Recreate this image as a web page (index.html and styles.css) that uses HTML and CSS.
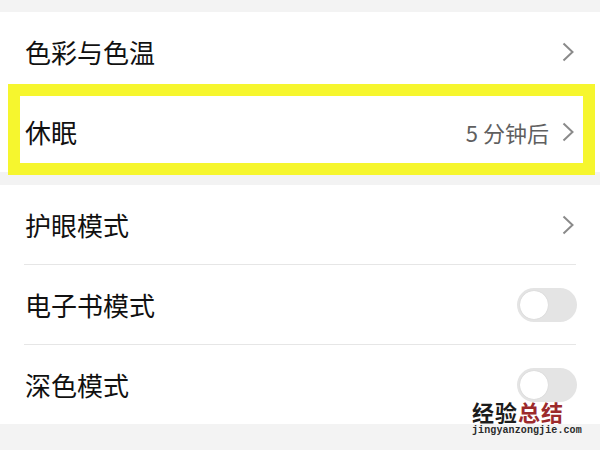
FILE: index.html
```html
<!doctype html>
<html>
<head>
<meta charset="utf-8">
<title>显示设置</title>
<link rel="stylesheet" href="styles.css">
</head>
<body>
	<div class="group">
		<div class="row">
			<span class="label">色彩与色温</span>
			<span class="arrow"><svg width="12" height="20" viewBox="0 0 12 20"><polyline points="1.5,1.5 10.5,10 1.5,18.5"/></svg></span>
		</div>
		<div class="row">
			<span class="label">休眠</span>
			<span class="value">5 分钟后</span>
			<span class="arrow"><svg width="12" height="20" viewBox="0 0 12 20"><polyline points="1.5,1.5 10.5,10 1.5,18.5"/></svg></span>
		</div>
	</div>
	<div class="mark"></div>

	<div class="group list">
		<div class="row">
			<span class="label">护眼模式</span>
			<span class="arrow"><svg width="12" height="20" viewBox="0 0 12 20"><polyline points="1.5,1.5 10.5,10 1.5,18.5"/></svg></span>
		</div>
		<div class="row">
			<span class="label">电子书模式</span>
			<span class="switch"><i></i></span>
		</div>
		<div class="row">
			<span class="label">深色模式</span>
			<span class="switch"><i></i></span>
		</div>
	</div>

	<div class="logo">
		<div class="logo_cn">经验<em>总结</em></div>
		<div class="logo_en">jingyanzongjie.com</div>
	</div>
</body>
</html>
```

FILE: styles.css
```css
body{ margin:0; padding-top:12px; background:#f3f3f3; font-family:"Noto Sans CJK SC", sans-serif; color:#111; height:438px; overflow:hidden;}
.group{ background:#fff; padding:0 24px;}
.group .row{ height:80px; display:flex; align-items:center;}
.list{ margin-top:13px;}
.list .row{ height:79px;}
.list .row + .row{ border-top:1px solid #e6e6e6;}
.label{ flex:1; font-size:26px; line-height:30px; padding-left:1px;}
.value{ font-size:22px; color:#5f5f5f; margin-right:13px;}
.arrow{ display:flex; margin-right:2px;}
.arrow polyline{ fill:none; stroke:#8a8a8a; stroke-width:2;}
.switch{ width:60px; height:34px; border-radius:17px; background:#e4e4e4; display:flex; align-items:center; padding:0 3px; box-sizing:border-box; margin-right:-1px;}
.switch i{ width:28px; height:28px; border-radius:50%; background:#fff; box-shadow:0 0 1px #bbb;}

/* yellow frame drawn over the 休眠 row */
.mark{ position:absolute; left:8px; top:84px; width:563px; height:67px; border:12px solid #f6f62e;}

.logo{ position:absolute; left:472px; top:399px;}
.logo_cn{ font-size:22px; font-weight:bold; line-height:24px; color:#1c1c1c; letter-spacing:1px;}
.logo_cn em{ font-style:normal; color:#9c2a2c;}
.logo_en{ font-family:"Liberation Mono", monospace; font-size:10px; font-weight:bold; line-height:12px; color:#2a2a2a; margin-top:2px; letter-spacing:0.1px;}
```
